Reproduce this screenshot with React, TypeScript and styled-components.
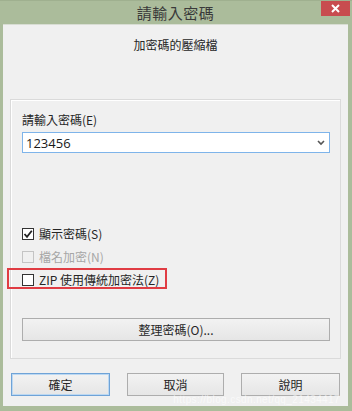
import React from "react";
import styled, { createGlobalStyle } from "styled-components";

const Global = createGlobalStyle`
  html, body { margin: 0; padding: 0; background: #aabb98; }
  body { font-family: "Noto Sans CJK TC", "Noto Sans", sans-serif; }
  * { box-sizing: border-box; }
`;

const Window = styled.div`
  position: relative;
  width: 352px;
  height: 411px;
  background: #abbc9b;
  border-top: 1px solid #9fb08f;
  padding: 0 4px 5px 3px;
  display: flex;
  flex-direction: column;
`;

const TitleBar = styled.div`
  height: 23px;
  display: flex;
  align-items: center;
  justify-content: center;
  font-size: 15px;
  color: #3a3a3a;
  letter-spacing: 0.5px;
`;

const CloseButton = styled.div`
  position: absolute;
  top: 0;
  right: 2px;
  width: 29px;
  height: 15px;
  background: #c84c4f;
  display: flex;
  align-items: center;
  justify-content: center;
`;

const Content = styled.div`
  flex: 1;
  background: #f0f0f0;
  border-top: 1px solid #d8ddd3;
  display: flex;
  flex-direction: column;
  align-items: stretch;
`;

const Subtitle = styled.div`
  margin-top: 12px;
  height: 16px;
  line-height: 16px;
  text-align: center;
  font-size: 12px;
  color: #262626;
`;

const Group = styled.div`
  margin: 46px 7px 0 7px;
  height: 260px;
  border: 1px solid #dadada;
  box-shadow: inset 1px 1px 0 #ffffff;
  padding: 12px 10px 16px 11px;
  display: flex;
  flex-direction: column;
`;

const Label = styled.div`
  height: 16px;
  line-height: 16px;
  font-size: 12px;
  color: #262626;
`;

const Combo = styled.div`
  margin-top: 4px;
  height: 21px;
  background: #fff;
  border: 1px solid #7eb4ea;
  display: flex;
  align-items: center;
  justify-content: space-between;
  padding: 0 4px 0 3px;
  font-size: 13px;
  color: #1a1a1a;
  font-family: "Open Sans", "Noto Sans", sans-serif;
`;

const Checks = styled.div`
  margin-top: 69px;
  display: flex;
  flex-direction: column;
`;

const CheckRow = styled.div<{ $disabled?: boolean }>`
  position: relative;
  height: 23px;
  display: flex;
  align-items: center;
  gap: 5px;
  font-size: 12px;
  color: ${(p) => (p.$disabled ? "#a6a6a6" : "#262626")};
`;

const Box = styled.span<{ $disabled?: boolean }>`
  width: 12px;
  height: 12px;
  border: 1px solid ${(p) => (p.$disabled ? "#c4c4c4" : "#333")};
  background: ${(p) => (p.$disabled ? "#f0f0f0" : "#fff")};
  display: flex;
  align-items: center;
  justify-content: center;
`;

const Highlight = styled.span`
  position: absolute;
  left: -15px;
  top: 0px;
  width: 160px;
  height: 21px;
  border: 2px solid #e03c43;
  pointer-events: none;
`;

const Button = styled.div<{ $default?: boolean; $width?: number }>`
  height: 23px;
  width: ${(p) => (p.$width ? `${p.$width}px` : "auto")};
  border: 1px solid ${(p) => (p.$default ? "#6fa3d7" : "#adadad")};
  box-shadow: ${(p) => (p.$default ? "inset 0 0 0 1px #bcd8f2" : "none")};
  background: linear-gradient(#f2f2f2, #e6e6e6);
  display: flex;
  align-items: center;
  justify-content: center;
  font-size: 12px;
  color: #262626;
`;

const OrganizeButton = styled(Button)`
  margin-top: 27px;
`;

const ButtonRow = styled.div`
  position: relative;
  margin: 14px 8px 0 8px;
  display: flex;
  justify-content: space-between;
`;

const Watermark = styled.div`
  position: absolute;
  right: 0;
  top: 21px;
  line-height: 11px;
  font-size: 10px;
  color: rgba(255, 255, 255, 0.6);
  font-family: "Liberation Sans", sans-serif;
  pointer-events: none;
  letter-spacing: 0.4px;
`;

export default function App() {
  return (
    <>
      <Global />
      <Window>
        <TitleBar>請輸入密碼</TitleBar>
        <CloseButton>
          <svg width="9" height="9" viewBox="0 0 9 9">
            <path d="M1 1 L8 8 M8 1 L1 8" stroke="#fff" strokeWidth="2" />
          </svg>
        </CloseButton>
        <Content>
          <Subtitle>加密碼的壓縮檔</Subtitle>
          <Group>
            <Label>請輸入密碼(E)</Label>
            <Combo>
              <span>123456</span>
              <svg width="8" height="6" viewBox="0 0 8 6">
                <path d="M1 1 L4 4 L7 1" stroke="#555" strokeWidth="1.6" fill="none" />
              </svg>
            </Combo>
            <Checks>
              <CheckRow>
                <Box>
                  <svg width="10" height="10" viewBox="0 0 10 10">
                    <path d="M1.5 5 L4 7.8 L8.8 1.8" stroke="#222" strokeWidth="1.8" fill="none" />
                  </svg>
                </Box>
                顯示密碼(S)
              </CheckRow>
              <CheckRow $disabled>
                <Box $disabled />
                檔名加密(N)
              </CheckRow>
              <CheckRow>
                <Box />
                ZIP 使用傳統加密法(Z)
                <Highlight />
              </CheckRow>
            </Checks>
            <OrganizeButton>整理密碼(O)...</OrganizeButton>
          </Group>
          <ButtonRow>
            <Button $default $width={99}>確定</Button>
            <Button $width={97}>取消</Button>
            <Button $width={99}>說明</Button>
            <Watermark>https://blog.csdn.net/qq_21434417</Watermark>
          </ButtonRow>
        </Content>
      </Window>
    </>
  );
}
